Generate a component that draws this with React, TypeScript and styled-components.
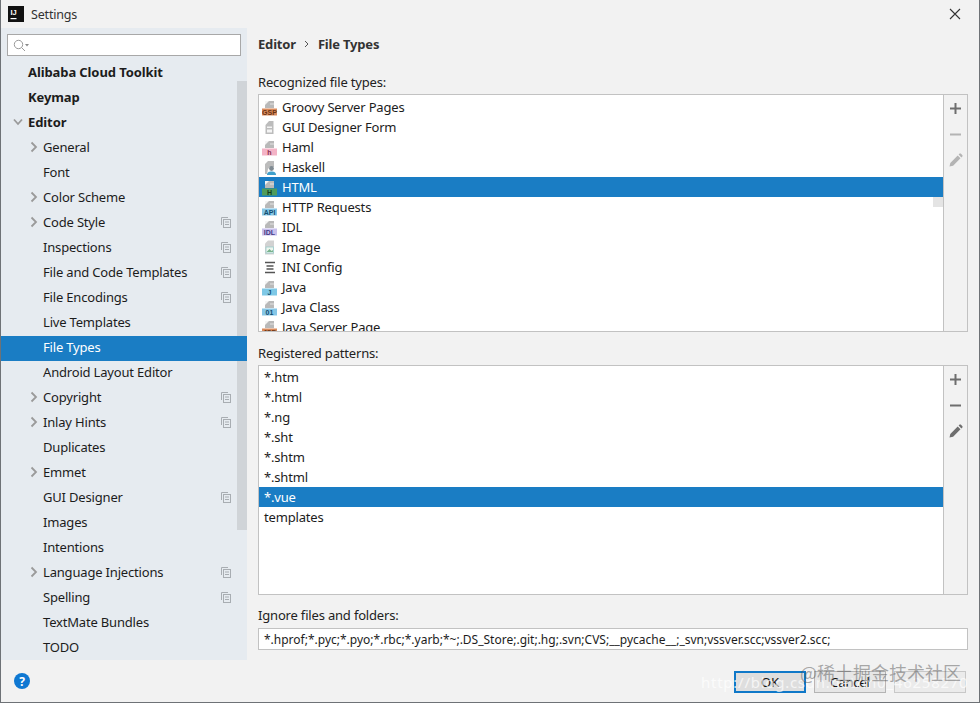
import React from "react";
import styled, { createGlobalStyle } from "styled-components";

const Global = createGlobalStyle`
  html, body { margin: 0; padding: 0; background: #f2f2f2; }
  * { box-sizing: border-box; }
`;

const Win = styled.div`
  width: 980px; height: 703px; position: relative; overflow: hidden;
  display: flex; flex-direction: column; background: #f2f2f2;
  border-left: 1px solid #6e7276; border-right: 1px solid #6e7276; border-bottom: 1px solid #6e7276;
  font-family: "Noto Sans", "Open Sans", sans-serif; font-size: 13px; letter-spacing: -0.18px; color: #1c1c1c;
`;
const TitleBar = styled.div`
  height: 28px; flex: none; display: flex; align-items: center; padding: 0 18px 0 7px; gap: 7px; font-size: 12.5px; color: #333;
`;
const Close = styled.div` margin-left: auto; width: 12px; height: 12px; display: flex; `;
const Body = styled.div` flex: 1; display: flex; min-height: 0; `;
const Sidebar = styled.div`
  width: 246px; flex: none; background: #e6ebf0; position: relative; padding: 6px 0 0;
  display: flex; flex-direction: column;
`;
const Search = styled.div`
  margin: 0 6px 5px 6px; height: 22px; background: #fff; border: 1px solid #a8a8a8; display: flex; align-items: center; padding-left: 5px;
  flex: none;
`;
const Thumb = styled.div`
  position: absolute; left: 236px; top: 53px; width: 10px; height: 449px; background: #d0d4d8;
`;
const NavRow = styled.div<{ $level: number; $selected?: boolean; $bold?: boolean }>`
  height: 25px; flex: none; display: flex; align-items: center; position: relative;
  padding-left: ${p => (p.$level === 0 ? 27 : 42)}px; padding-bottom: 3px;
  font-weight: ${p => (p.$bold ? 700 : 400)};
  letter-spacing: ${p => (p.$bold ? "-0.1px" : "-0.18px")};
  background: ${p => (p.$selected ? "#1a7dc4" : "transparent")};
  color: ${p => (p.$selected ? "#fff" : "#1c1c1c")};
`;
const Arrow = styled.span<{ $level: number }>`
  position: absolute; left: ${p => (p.$level === 0 ? 12 : 28)}px; top: 5px; width: 10px; height: 12px; display: flex;
`;
const CopyMark = styled.span`
  position: absolute; left: 220px; top: 6px; width: 10px; height: 11px; display: flex;
`;
const Main = styled.div`
  flex: 1; padding: 6px 11px 0 11px; display: flex; flex-direction: column; min-width: 0;
`;
const Crumbs = styled.div`
  height: 20px; display: flex; align-items: center; gap: 8px; font-weight: 700; color: #333; margin-bottom: 19px; flex: none;
`;
const FieldLabel = styled.div` height: 18px; line-height: 18px; flex: none; color: #222; margin-bottom: 3px; `;
const ListBox = styled.div<{ $h: number; $gap: number }>`
  height: ${p => p.$h}px; flex: none; border: 1px solid #c2c2c2; display: flex; margin-bottom: ${p => p.$gap}px;
`;
const ListArea = styled.div`
  flex: 1; background: #fff; overflow: hidden; padding-top: 2px; position: relative; min-width: 0;
`;
const PatternArea = styled(ListArea)`
  padding-top: 1px;
`;
const ListThumb = styled.div`
  position: absolute; right: 0; top: 102px; width: 10px; height: 10px; background: #e4e4e4;
`;
const Tools = styled.div`
  width: 24px; flex: none; border-left: 1px solid #c2c2c2; background: #f2f2f2; display: flex; flex-direction: column; align-items: center; padding-top: 5px; gap: 9px;
`;
const Tool = styled.div`
  width: 16px; height: 17px; display: flex; align-items: center; justify-content: center;
  &:last-child { margin-top: -1px; }
`;
const Row = styled.div<{ $selected?: boolean; $pad: number }>`
  height: 20px; display: flex; align-items: center; gap: 4px; padding-left: ${p => p.$pad}px; white-space: nowrap;
  background: ${p => (p.$selected ? "#1a7dc4" : "transparent")};
  color: ${p => (p.$selected ? "#fff" : "#1c1c1c")};
`;
const Input = styled.div`
  height: 22px; flex: none; margin-top: 1px; background: #fff; border: 1px solid #c2c2c2; display: flex; align-items: center; padding-left: 5px; white-space: nowrap; overflow: hidden; font-size: 12px; letter-spacing: 0;
`;
const Footer = styled.div`
  position: absolute; left: 0; right: 0; bottom: 0; height: 42px; background: #f2f2f2; display: flex; align-items: flex-start; padding: 11px 13px 0 13px; gap: 8px;
`;
const Help = styled.div`
  width: 16px; height: 16px; border-radius: 50%; background: #0f78d2; color: #fff; font-size: 12px; font-weight: 700; display: flex; align-items: center; justify-content: center; margin-top: 2px; margin-right: auto;
`;
const Btn = styled.div<{ $primary?: boolean; $off?: boolean }>`
  width: 72px; height: 22px; display: flex; align-items: center; justify-content: center;
  background: ${p => (p.$primary ? "#dedede" : p.$off ? "#ebebeb" : "#e6e6e6")};
  border: ${p => (p.$primary ? "2px solid #0f78c8" : p.$off ? "1px solid #c8c8c8" : "1px solid #b4b4b4")};
  color: #111;
`;
const Mark = styled.div`
  position: absolute; left: 799px; top: 659px; font-family: "Noto Sans CJK SC", sans-serif; font-size: 18px; letter-spacing: 0; color: rgba(90,90,90,0.5); white-space: nowrap; pointer-events: none;
`;
const MarkUrl = styled.div`
  position: absolute; left: 700px; top: 672px; font-size: 15px; letter-spacing: 0.75px; color: rgba(255,255,255,0.72); white-space: nowrap; pointer-events: none;
`;

const Doc = () => (
  <>
    <path d="M3 2h9v7H3z" fill="#b9b9b9" />
    <path d="M3 2h4L3 6z" fill="#f4f4f4" />
    <path d="M8 5h4" stroke="#eee" strokeWidth="0.8" />
  </>
);
const Badge = ({ color, label, fg = "#333" }: { color: string; label: string; fg?: string }) => (
  <>
    <Doc />
    <rect x="0" y="9.5" width="15" height="7" fill={color} />
    <text x="7.5" y="15.6" textAnchor="middle" fontFamily="Liberation Sans, sans-serif" fontWeight="700" fontSize="7" letterSpacing="0" fill={fg}>{label}</text>
  </>
);
const FileIcon = ({ kind }: { kind: string }) => {
  let c: React.ReactNode = null;
  if (kind === "gsp") c = <Badge color="#d98a5c" label="GSP" fg="#6b3413" />;
  if (kind === "html") c = <Badge color="#4f9c5c" label="H" fg="#113d1c" />;
  if (kind === "haml") c = <Badge color="#f4b3c6" label="h" fg="#8a2b4c" />;
  if (kind === "api") c = <Badge color="#86c6e6" label="API" fg="#124d70" />;
  if (kind === "idl") c = <Badge color="#c8c0ec" label="IDL" fg="#453a86" />;
  if (kind === "j") c = <Badge color="#7ec8e6" label="J" fg="#124d70" />;
  if (kind === "01") c = <Badge color="#86c6e6" label="01" fg="#124d70" />;
  if (kind === "jsp") c = <Badge color="#d98a5c" label="JSP" fg="#6b3413" />;
  if (kind === "gui") c = (
    <>
      <path d="M7 2h4.5v13H3.5V6z" fill="#bcbcbc" />
      <rect x="5" y="7.5" width="5" height="1.5" fill="#f4f4f4" />
      <rect x="5" y="10.5" width="5" height="3" fill="#f4f4f4" />
    </>
  );
  if (kind === "hs") c = (
    <>
      <path d="M6 2h6v6H8l-2 2-1 5H3V5z" fill="#bcbcbc" />
      <circle cx="9.5" cy="9.5" r="2.4" fill="#7f8a92" />
      <path d="M5 16c0-3 2-3.6 4.5-3.6S14 13 14 16z" fill="#3fa0cc" />
    </>
  );
  if (kind === "img") c = (
    <>
      <path d="M6 1.5h6v14H3V4.5z" fill="#d2d2d2" />
      <rect x="4" y="8" width="7.5" height="6" fill="#eef5ee" stroke="#9cc" strokeWidth="0.8" />
      <path d="M4.5 13l3-3 2 2 1.5-1v2z" fill="#79b38d" />
    </>
  );
  if (kind === "ini") c = (
    <path d="M3 3.5h10M4.5 7h7M4.5 10h7M3 13.5h10" stroke="#555" strokeWidth="1.6" />
  );
  return <svg width="16" height="17" viewBox="0 0 16 17" style={{ flex: "none" }}>{c}</svg>;
};

const types: [string, string][] = [
  ["gsp", "Groovy Server Pages"], ["gui", "GUI Designer Form"], ["haml", "Haml"], ["hs", "Haskell"],
  ["html", "HTML"], ["api", "HTTP Requests"], ["idl", "IDL"], ["img", "Image"], ["ini", "INI Config"],
  ["j", "Java"], ["01", "Java Class"], ["jsp", "Java Server Page"],
];
const patterns = ["*.htm", "*.html", "*.ng", "*.sht", "*.shtm", "*.shtml", "*.vue", "templates"];
type Nav = { t: string; lv: number; bold?: boolean; arrow?: "r" | "d"; copy?: boolean; sel?: boolean };
const nav: Nav[] = [
  { t: "Alibaba Cloud Toolkit", lv: 0, bold: true }, { t: "Keymap", lv: 0, bold: true },
  { t: "Editor", lv: 0, bold: true, arrow: "d" }, { t: "General", lv: 1, arrow: "r" }, { t: "Font", lv: 1 },
  { t: "Color Scheme", lv: 1, arrow: "r" }, { t: "Code Style", lv: 1, arrow: "r", copy: true },
  { t: "Inspections", lv: 1, copy: true }, { t: "File and Code Templates", lv: 1, copy: true },
  { t: "File Encodings", lv: 1, copy: true }, { t: "Live Templates", lv: 1 }, { t: "File Types", lv: 1, sel: true },
  { t: "Android Layout Editor", lv: 1 }, { t: "Copyright", lv: 1, arrow: "r", copy: true },
  { t: "Inlay Hints", lv: 1, arrow: "r", copy: true }, { t: "Duplicates", lv: 1 }, { t: "Emmet", lv: 1, arrow: "r" },
  { t: "GUI Designer", lv: 1, copy: true }, { t: "Images", lv: 1 }, { t: "Intentions", lv: 1 },
  { t: "Language Injections", lv: 1, arrow: "r", copy: true }, { t: "Spelling", lv: 1, copy: true },
  { t: "TextMate Bundles", lv: 1 }, { t: "TODO", lv: 1 },
];

const Plus = ({ c }: { c: string }) => (
  <svg width="13" height="13" viewBox="0 0 13 13"><path d="M6.5 1v11M1 6.5h11" stroke={c} strokeWidth="2" /></svg>
);
const Minus = ({ c }: { c: string }) => (
  <svg width="13" height="13" viewBox="0 0 13 13"><path d="M1 6.5h11" stroke={c} strokeWidth="2" /></svg>
);
const Pencil = ({ c }: { c: string }) => (
  <svg width="14" height="14" viewBox="0 0 14 14"><path d="M0.5 13.5l.8-3.6 7.4-7.4 2.8 2.8-7.4 7.4zM9.6 1.6l1-1a1 1 0 0 1 1.2 0l1.6 1.6a1 1 0 0 1 0 1.2l-1 1z" fill={c} /></svg>
);
const ToolSet = ({ plus, minus, pen }: { plus: string; minus: string; pen: string }) => (
  <Tools>
    <Tool><Plus c={plus} /></Tool>
    <Tool><Minus c={minus} /></Tool>
    <Tool><Pencil c={pen} /></Tool>
  </Tools>
);

export default function App() {
  return (
    <Win>
      <Global />
      <TitleBar>
        <svg width="16" height="16" viewBox="0 0 16 16" style={{ flex: "none" }}>
          <rect width="16" height="16" fill="#111" />
          <text x="2.5" y="9" fontFamily="Liberation Sans, sans-serif" fontWeight="700" fontSize="7.5" fill="#fff">IJ</text>
          <rect x="2.5" y="12" width="6" height="1.2" fill="#fff" />
        </svg>
        Settings
        <Close>
          <svg width="12" height="12" viewBox="0 0 12 12"><path d="M1 1l10 10M11 1L1 11" stroke="#333" strokeWidth="1.1" /></svg>
        </Close>
      </TitleBar>
      <Body>
        <Sidebar>
          <Search>
            <svg width="17" height="13" viewBox="0 0 17 13">
              <circle cx="5.5" cy="5.5" r="4.2" fill="none" stroke="#9a9a9a" />
              <path d="M8.5 8.5l3.5 3.5" stroke="#9a9a9a" />
              <path d="M12 5h4l-2 2.4z" fill="#8a8a8a" />
            </svg>
          </Search>
          <Thumb />
          {nav.map(n => (
            <NavRow key={n.t} $level={n.lv} $selected={n.sel} $bold={n.bold}>
              {n.arrow && (
                <Arrow $level={n.lv}>
                  <svg width="10" height="12" viewBox="0 0 10 12">
                    {n.arrow === "r"
                      ? <path d="M2.5 1.5L7 6l-4.5 4.5" fill="none" stroke="#9a9a9a" strokeWidth="1.8" />
                      : <path d="M1 3.5L5 8l4-4.5" fill="none" stroke="#9a9a9a" strokeWidth="1.8" />}
                  </svg>
                </Arrow>
              )}
              {n.t}
              {n.copy && (
                <CopyMark>
                  <svg width="10" height="11" viewBox="0 0 10 11" fill="none" stroke="#a8adb2">
                    <path d="M.5 8V.5H7" />
                    <rect x="2.5" y="2.5" width="7" height="8" />
                    <path d="M4 5h4M4 7.5h4" />
                  </svg>
                </CopyMark>
              )}
            </NavRow>
          ))}
        </Sidebar>
        <Main>
          <Crumbs>
            <span>Editor</span>
            <svg width="6" height="8" viewBox="0 0 6 8"><path d="M1 1l3 3-3 3" fill="none" stroke="#555" /></svg>
            <span>File Types</span>
          </Crumbs>
          <FieldLabel>Recognized file types:</FieldLabel>
          <ListBox $h={238} $gap={12}>
            <ListArea>
              {types.map(([k, t]) => (
                <Row key={t} $pad={3} $selected={t === "HTML"}><FileIcon kind={k} />{t}</Row>
              ))}
              <ListThumb />
            </ListArea>
            <ToolSet plus="#6e6e6e" minus="#b4b4b4" pen="#b4b4b4" />
          </ListBox>
          <FieldLabel>Registered patterns:</FieldLabel>
          <ListBox $h={230} $gap={11}>
            <PatternArea>
              {patterns.map(t => (
                <Row key={t} $pad={5} $selected={t === "*.vue"}>{t}</Row>
              ))}
            </PatternArea>
            <ToolSet plus="#6e6e6e" minus="#6e6e6e" pen="#6e6e6e" />
          </ListBox>
          <FieldLabel>Ignore files and folders:</FieldLabel>
          <Input>*.hprof;*.pyc;*.pyo;*.rbc;*.yarb;*~;.DS_Store;.git;.hg;.svn;CVS;__pycache__;_svn;vssver.scc;vssver2.scc;</Input>
        </Main>
      </Body>
      <Footer>
        <Help>?</Help>
        <Btn $primary>OK</Btn>
        <Btn>Cancel</Btn>
        <Btn $off />
      </Footer>
      <MarkUrl>http://blog.csdn.net/m0_46258270</MarkUrl>
      <Mark>@稀土掘金技术社区</Mark>
    </Win>
  );
}
